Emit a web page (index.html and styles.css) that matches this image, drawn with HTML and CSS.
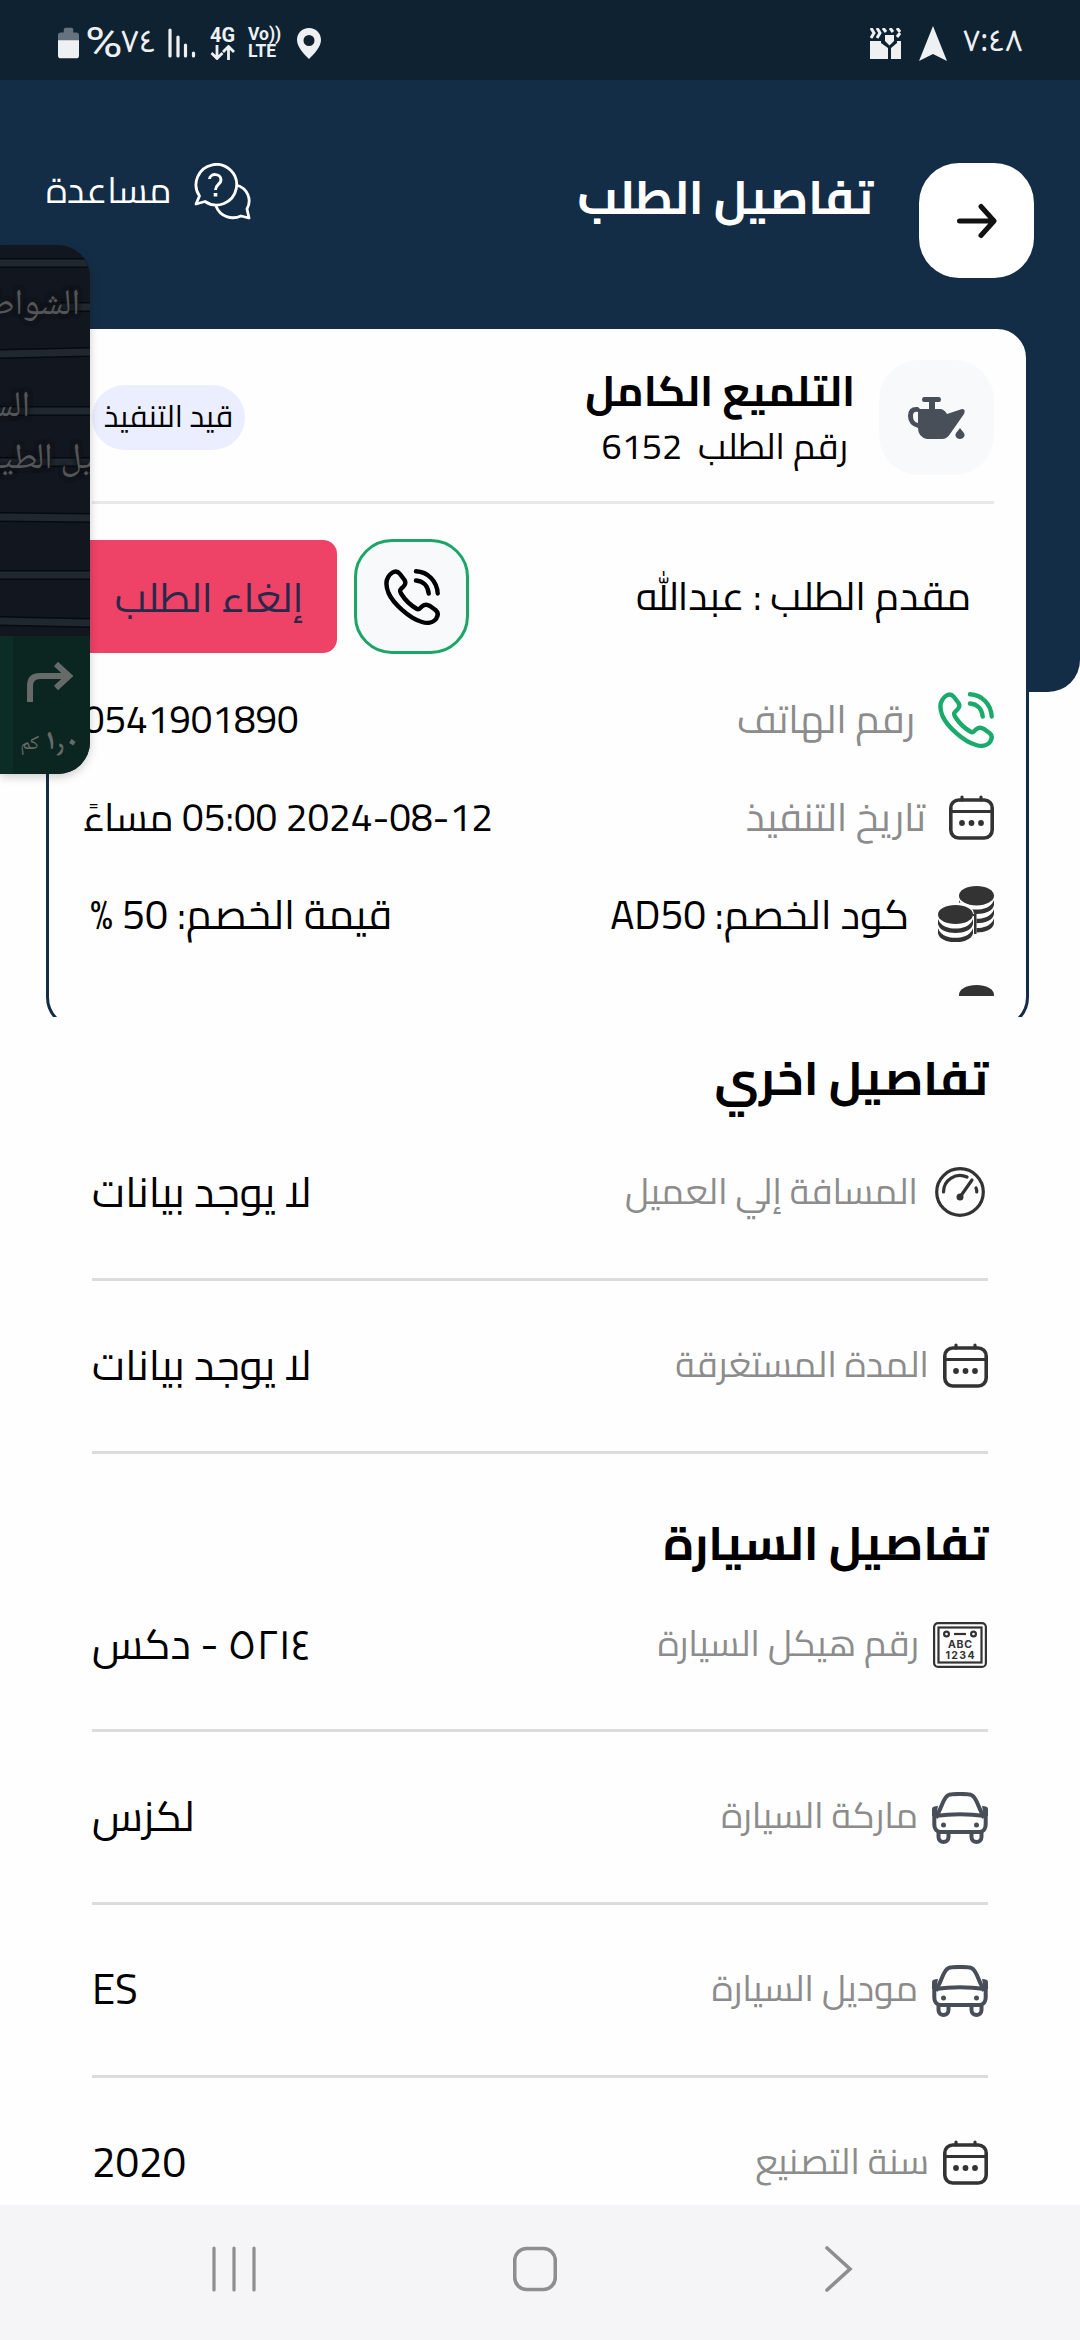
FILE: index.html
```
<!DOCTYPE html>
<html lang="ar" dir="rtl">
<head>
<meta charset="utf-8">
<title>تفاصيل الطلب</title>
<link rel="stylesheet" href="styles.css">
</head>
<body>
<svg class="defs" width="0" height="0">
  <symbol id="phone" viewBox="0 0 56 56"><g fill="none" stroke="currentColor" stroke-width="4.4" stroke-linecap="round" stroke-linejoin="round"><path d="M8.500 3.500C11.500 1.500 14 2.500 16 5L20.500 11C22 13.500 21.500 15.500 19.500 17.500C16.500 20.500 15 21 17 24.500C21 31 26 36 33 40C35 41.500 36.500 38.500 38.500 37C41 35 43.500 35.500 46 37L51.500 41C54.500 43.500 54 47 52 50C49 54 43 54.500 38 53C25 49.500 9 34 4.500 24C1.500 16.500 1 8.500 8.500 3.500Z"/><path d="M32 2.300C44 3 53 12 53.700 24.500M32 11.500C39 12 44 17 44.700 24.500"/></g></symbol>
  <symbol id="calendar" viewBox="0 0 45 45"><g fill="none" stroke="#333" stroke-width="3.600" stroke-linecap="round"><rect x="1.800" y="5" width="41.400" height="38" rx="8"/><path d="M2 16.500H43M13 2V5M32 2V5" stroke-width="3.200"/></g><g fill="#333"><circle cx="13" cy="28" r="2.900"/><circle cx="22.500" cy="28" r="2.900"/><circle cx="32" cy="28" r="2.900"/></g></symbol>
  <symbol id="coins" viewBox="0 0 56 56"><g fill="#333"><ellipse cx="38.500" cy="9.700" rx="17.500" ry="9.700"/><path id="b" d="M21 14C24 22 32 23.500 38.500 23.500S53 22 56 14V19C55 25 47 28 38.500 28S22 25 21 19Z"/><use href="#b" y="9.300"/><use href="#b" y="18.600"/></g><path fill="#fff" d="M-3 28C-3 13 35 12 36 28L38.500 30V56H-3Z"/><path fill="#333" d="M35 28H38.500V48H35Z"/><path fill="#fff" d="M0 30H36V56H0Z"/><g fill="#333"><ellipse cx="17.500" cy="28.500" rx="17.500" ry="9.500"/><path id="c" d="M0 33C3 41 11 42.500 17.500 42.500S32 41 35 33V38C34 44 26 47 17.500 47S1 44 0 38Z"/><use href="#c" y="9.300"/></g></symbol>
  <symbol id="car" viewBox="0 0 56 52"><g fill="none" stroke="#474e57" stroke-width="4" stroke-linejoin="round"><path d="M4 26C5 23 7 20 9 15C13 5 15 2.500 20 2.300Q28 1.500 36 2.300C41 2.500 43 5 47 15C49 20 51 23 52 26"/><path d="M3 24Q28 20.500 53 24"/><path d="M2.300 17V32C2.300 38 6 40 9 40H47C50 40 53.700 38 53.700 32V17"/><path d="M6.500 40V45C6.500 51.500 16.500 51.500 16.500 45V40M39.500 40V45C39.500 51.500 49.500 51.500 49.500 45V40"/></g><g fill="#474e57"><path d="M0 17Q0 14 6 14L4 24H0ZM56 17Q56 14 50 14L52 24H56Z"/><circle cx="11.500" cy="33" r="2.500"/><circle cx="44.500" cy="33" r="2.500"/></g></symbol>
</svg>
<div class="status" dir="ltr">
  <svg class="s-bat" viewBox="0 0 22 32"><path fill="#66727d" d="M0 14V8Q0 5 3 5H6V2Q6 0 8 0H14Q16 0 16 2V5H19Q22 5 22 8V14Z"/><path fill="#eef0f2" d="M0 13H22V29Q22 32 19 32H3Q0 32 0 29Z"/></svg>
  <span class="pct"><span class="sign">%</span><span class="ardig">٧٤</span></span>
  <svg class="s-sig" viewBox="0 0 28 30"><path stroke="#eef0f2" stroke-width="3.200" stroke-linecap="round" d="M2 2V28M10 9V28M17.500 17V28M25.500 25V28"/></svg>
  <span class="s-net"><b>4G</b><svg viewBox="0 0 24 15"><path fill="none" stroke="#eef0f2" stroke-width="2.800" d="M6.500 0V13M1 8L6.500 13.500L12 8M18 15V2M12.500 7L18 1.500L23.500 7"/></svg></span>
  <span class="s-volte"><b>Vo))</b><b>LTE</b></span>
  <svg class="s-pin" viewBox="0 0 24 31"><path fill="#eef0f2" fill-rule="evenodd" d="M12 0C5 0 0 5 0 12C0 19 7 26 12 31C17 26 24 19 24 12C24 5 19 0 12 0ZM12 7A5.500 5.500 0 1 1 12 18A5.500 5.500 0 1 1 12 7Z"/></svg>
  <svg class="s-clap" viewBox="0 0 31 31"><path fill="#eef0f2" d="M0 13H11V15L18 20V31H0ZM21 20L27 15V13H31V31H21Z"/><path fill="#eef0f2" d="M15 7H24V13L19.500 17.500L15 13Z"/><path fill="none" stroke="#eef0f2" stroke-width="3" d="M1 0L4 5L1 10M7 0L10 5L7 10M13 0L16 4M20 0L23 4M27 0L30 4M30 5L27 9"/></svg>
  <svg class="s-arrow" viewBox="0 0 28 35"><path fill="#eef0f2" d="M14 0L28 35L14 28L0 35Z"/></svg>
  <span class="clock">٧:٤٨</span>
</div>
<header class="hero">
  <button class="back"><svg viewBox="0 0 40 36"><path fill="none" stroke="#111" stroke-width="5" stroke-linecap="round" stroke-linejoin="round" d="M2.500 18H36M24 3.500L37 18L24 32.500"/></svg></button>
  <h1>تفاصيل الطلب</h1>
  <div class="help">
    <svg viewBox="0 0 57 57"><g fill="none" stroke="#fff" stroke-width="2.800" stroke-linejoin="round"><path d="M5.500 33A20.300 20.300 0 1 1 11 38.500L2 41Z"/><path d="M42 22C54 25 58 37 53 46L55 55L47 53C38 57 26 54 22 43"/><path d="M15.500 16C16 10 27 10 27 17C27 21 21.500 21.500 21.500 27" stroke-width="3"/></g><rect x="19.700" y="30" width="3.600" height="3.500" fill="#fff"/></svg>
    <span>مساعدة</span>
  </div>
</header>
<main>
  <div class="cardwrap"><section class="card">
    <div class="service">
      <div class="lamp"><svg viewBox="0 0 57 42"><path fill="#494f58" d="M16 0H31Q33 0 33 2.500T31 5H27V12H32Q36 12 39 17L54 12Q58 12 56 17L42 37Q39 42 34 42H19Q10 40 10 31Q0 28 0 19Q0 9 10 10L12 12H21V5H16Q14 5 14 2.500T16 0ZM10 15Q5 14 5 19Q5 25 10 26Z"/><path fill="#494f58" d="M52 31C54 34 57 36 56.500 38.500C56 43 48 43 47.500 38.500C47 36 50 34 52 31Z"/></svg></div>
      <div class="names"><h2>التلميع الكامل</h2><p>رقم الطلب&nbsp; 6152</p></div>
      <span class="badge">قيد التنفيذ</span>
    </div>
    <div class="applicant">
      <span class="who">مقدم الطلب : عبدالله</span>
      <button class="call"><svg><use href="#phone"/></svg></button>
      <button class="cancel">إلغاء الطلب</button>
    </div>
    <div class="row r-phone"><svg class="i56 green"><use href="#phone"/></svg><span class="label">رقم الهاتف</span><span class="value">0541901890</span></div>
    <div class="row r-date"><svg class="i45"><use href="#calendar"/></svg><span class="label">تاريخ التنفيذ</span><span class="value">2024-08-12 05:00 مساءً</span></div>
    <div class="row r-code"><svg class="i56"><use href="#coins"/></svg><span class="label">كود الخصم: AD50</span><span class="value">قيمة الخصم: 50 %</span></div>
    <div class="peek"><svg class="i56"><use href="#coins"/></svg></div>
  </section></div>
  <section class="details">
    <h2>تفاصيل اخري</h2>
    <div class="item d1"><svg class="gauge" viewBox="0 0 50 50"><g fill="none" stroke="#333" stroke-width="3.200" stroke-linecap="round"><circle cx="25" cy="25" r="23.300"/><path d="M8.500 25A16.500 16.500 0 0 1 32 10M41 21Q42 23 41.700 25M25 30L37 13"/></g><circle cx="25" cy="30" r="3.500" fill="#333"/></svg><span class="label">المسافة إلي العميل</span><span class="value">لا يوجد بيانات</span></div>
    <div class="item d2"><svg class="i45"><use href="#calendar"/></svg><span class="label">المدة المستغرقة</span><span class="value">لا يوجد بيانات</span></div>
    <h2 class="h-car">تفاصيل السيارة</h2>
    <div class="item d3"><svg class="plate" viewBox="0 0 54 46"><g fill="none" stroke="#333" stroke-width="2.200"><rect x="1.100" y="1.100" width="51.800" height="43.800" rx="4"/><rect x="5.500" y="5.500" width="43" height="35"/><circle cx="13.500" cy="12" r="2.400"/><circle cx="40.500" cy="12" r="2.400"/><path d="M21 12H33"/></g><g fill="#333" font-family="Inter" font-weight="700" font-size="10.500" text-anchor="middle" direction="ltr"><text x="27" y="25.500" textLength="24">ABC</text><text x="27" y="37" textLength="29">1234</text></g></svg><span class="label">رقم هيكل السيارة</span><span class="value">٥٢١٤ - دكس</span></div>
    <div class="item d4"><svg class="car"><use href="#car"/></svg><span class="label">ماركة السيارة</span><span class="value">لكزس</span></div>
    <div class="item d5"><svg class="car"><use href="#car"/></svg><span class="label">موديل السيارة</span><span class="value">ES</span></div>
    <div class="item d6"><svg class="i45"><use href="#calendar"/></svg><span class="label">سنة التصنيع</span><span class="value">2020</span></div>
  </section>
</main>
<nav class="sysnav" dir="ltr">
  <svg width="44" height="46" viewBox="0 0 44 46"><path stroke="#8e8e90" stroke-width="3.200" stroke-linecap="round" d="M2 2V44M22 2V44M42 2V44"/></svg>
  <svg width="44" height="46" viewBox="0 0 44 46"><rect x="1.700" y="2.500" width="40.600" height="41" rx="12" fill="none" stroke="#8e8e90" stroke-width="3.600"/></svg>
  <svg width="44" height="46" viewBox="0 0 44 46"><path fill="none" stroke="#8e8e90" stroke-width="3.600" stroke-linecap="round" d="M14 2L37 23L14 44"/></svg>
</nav>
<aside class="pip">
  <svg class="roads" viewBox="0 0 90 391"><g stroke="#070a10" stroke-width="10"><path d="M0 18H90M60 62H90M0 109L90 107M0 166H90M0 217H90M0 272L90 273M0 330H90M0 376L90 378"/></g><g stroke="#20272f" stroke-width="7"><path d="M0 18H90M60 62H90M0 109L90 107M0 166H90M0 217H90M0 272L90 273M0 330H90M0 376L90 378"/></g></svg>
  <span class="m m1">الشواطئ</span><span class="m m2">السلام</span><span class="m m3">سبيل الطيبة</span>
  <div class="turn"><svg viewBox="0 0 48 40"><path fill="none" stroke="#666a69" stroke-width="6" d="M4 40V24Q4 14 14 14H42"/><path fill="none" stroke="#666a69" stroke-width="6" d="M30 2L43 14L30 26"/></svg><span class="km"><b>١٫٠</b> كم</span></div>
</aside>
</body>
</html>
```
FILE: styles.css
```
* { box-sizing: border-box; }
body { margin: 0; width: 1080px; height: 2340px; position: relative; overflow: hidden; background: #fefefe; color: #000; font-family: Cairo, "Noto Kufi Arabic", "Noto Sans", "Noto Sans Arabic", "DejaVu Sans", sans-serif; }
h1, h2, p { margin: 0; white-space: nowrap; }
button { border: 0; padding: 0; font: inherit; }
svg { display: block; flex: none; }
.defs { position: absolute; }

.status { height: 80px; background: #0f2232; color: #eef0f2; display: flex; align-items: center; padding: 6px 57px 0 58px; }
.s-bat { width: 21px; height: 32px; }
.pct { display: flex; align-items: center; width: 75px; margin-left: 6px; line-height: 40px; }
.sign { width: 36px; font-family: Roboto, sans-serif; font-size: 42px; transform: scaleX(1.22); transform-origin: left; }
.ardig { font-size: 31px; font-family: "Noto Sans Arabic", "DejaVu Sans", sans-serif; margin-top: -3px; }
.s-sig { width: 28px; height: 30px; margin-left: 8px; }
.s-net { width: 26px; margin-left: 14px; }
.s-net b, .s-volte b { display: block; font-family: Roboto, sans-serif; font-weight: 700; font-size: 20px; line-height: 16px; white-space: nowrap; }
.s-net svg { width: 25px; height: 15px; margin-top: 2px; }
.s-volte { width: 34px; margin-left: 12px; }
.s-volte b { font-size: 17.5px; line-height: 17px; }
.s-pin { width: 24px; height: 31px; margin-left: 15px; }
.s-clap { width: 31px; height: 31px; margin-left: auto; }
.s-arrow { width: 28px; height: 35px; margin-left: 18px; }
.clock { width: 60px; margin-left: 16px; font-family: "Noto Sans Arabic", "DejaVu Sans", sans-serif; font-size: 30px; line-height: 40px; margin-top: -2px; white-space: nowrap; }

.hero { height: 612px; margin-bottom: -366px; background: #142d46; border-radius: 0 0 32px 32px; padding: 83px 46px 0; display: flex; align-items: flex-start; color: #fff; }
.back { width: 115px; height: 115px; border-radius: 40px; background: #fff; display: grid; place-items: center; }
.back svg { width: 40px; height: 36px; }
.hero h1 { margin-right: 46px; margin-top: -6px; font-size: 47.3px; line-height: 80px; }
.help { margin-right: auto; display: flex; align-items: center; gap: 22px; font-size: 35.8px; height: 57px; }
.help span { line-height: 57px; margin-top: -5px; }
.help svg { width: 57px; height: 57px; }

.cardwrap { position: relative; height: 691px; padding: 0 51px 0 46px; overflow: hidden; }
.card { height: 703px; border: 3px solid #142d46; border-radius: 32px; background: #fefefe; padding: 31px 32px 0 43px; }
.service { height: 144px; display: flex; align-items: flex-start; border-bottom: 3px solid #e8e8e8; }
.lamp { width: 115px; height: 115px; border-radius: 40px; background: #f8f9fb; display: grid; place-items: center; }
.lamp svg { width: 57px; height: 42px; }
.names { margin-right: 24px; padding-top: 3px; }
.names h2 { font-size: 41.8px; line-height: 56px; }
.names p { font-size: 36px; line-height: 54px; margin-right: 7px; }
.badge { margin: 25px auto 0 0; width: 153px; height: 65px; border-radius: 33px; background: #ebeeff; display: grid; place-items: center; font-size: 30.4px; line-height: 60px; padding-bottom: 3px; white-space: nowrap; }
.applicant { height: 151px; margin-top: 35px; display: flex; align-items: flex-start; }
.who { margin-right: 23px; line-height: 114px; font-size: 39.5px; white-space: nowrap; }
.call { width: 115px; height: 115px; margin-right: auto; border: 3px solid #1ba566; border-radius: 38px; background: #f7f9fb; color: #000; display: grid; place-items: center; }
.call svg { width: 56px; height: 56px; }
.cancel { width: 260px; height: 113px; margin: 1px 17px 0 -15px; border-radius: 14px; background: #ee4266; color: #25294a; font-size: 40.5px; padding-left: 4px; }
.row { display: flex; align-items: center; height: 60px; font-size: 38.5px; line-height: 60px; white-space: nowrap; }
.i56 { width: 56px; height: 56px; }
.i45 { width: 45px; height: 45px; }
.green { color: #1aab6c; }
.label { color: #8c8c8c; white-space: nowrap; }
.value { margin-right: auto; white-space: nowrap; }
.row .label { margin-right: 23px; font-size: 39px; }
.row .value { margin-left: -9px; }
.r-phone .label, .r-phone .value { margin-top: -3px; }
.r-date { margin-top: 37px; }
.r-date .label { margin-right: 23px; }
.r-date .value { font-size: 38.7px; }
.r-code { margin-top: 37px; }
.r-code .label { margin-right: 29px; color: #000; font-size: 40.6px; }
.r-code .value { margin-left: -2px; font-size: 41px; }
.peek { height: 11px; margin-top: 41px; overflow: hidden; }

.details { padding: 30px 92px 0; }
.details h2 { font-size: 47.3px; line-height: 62px; height: 80px; }
.details .h-car { margin-top: 50px; line-height: 78px; }
.item { height: 173px; display: flex; align-items: flex-start; padding-top: 62px; border-bottom: 3px solid #dcdcdc; font-size: 42px; }
.item > span { line-height: 43px; }
.item .label { font-size: 36px; margin-right: 14px; }
.d1 { height: 154px; padding-top: 43px; }
.d3 { height: 148px; padding-top: 38px; }
.d6 { border: 0; }
.gauge { width: 50px; height: 50px; margin-right: 3px; margin-top: -3px; }
.item .gauge + .label { margin-right: 17px; }
.plate { width: 54px; height: 46px; margin-right: 1px; }
.car { width: 56px; height: 52px; margin-top: -2px; }

.sysnav { position: absolute; inset: auto 0 0 0; height: 135px; background: #f5f5f7; display: flex; justify-content: space-between; padding: 41px 223px 0 212px; }

.pip { position: absolute; left: 0; top: 245px; width: 90px; height: 529px; border-radius: 0 32px 32px 0; overflow: hidden; background: #12161e; box-shadow: 0 3px 10px #0003; }
.roads { width: 90px; height: 391px; }
.m { position: absolute; color: #53565a; font-size: 36px; line-height: 44px; white-space: nowrap; text-shadow: 0 0 4px #14161a, 0 0 4px #14161a, 0 0 5px #14161a; font-family: "Noto Naskh Arabic", "DejaVu Sans", sans-serif; }
.m1 { right: 10px; top: 40px; }
.m2 { right: 60px; top: 142px; }
.m3 { right: -39px; top: 194px; }
.turn { height: 138px; background: #0b2520; border-left: 13px solid #0b2d25; }
.turn svg { width: 48px; height: 40px; margin-right: 16px; position: relative; top: 26px; }
.km { display: block; margin: 42px 11px 0 0; font-size: 20px; color: #666a69; white-space: nowrap; font-family: "Noto Naskh Arabic", "DejaVu Sans", sans-serif; }
.km b { font-size: 29px; }
```
